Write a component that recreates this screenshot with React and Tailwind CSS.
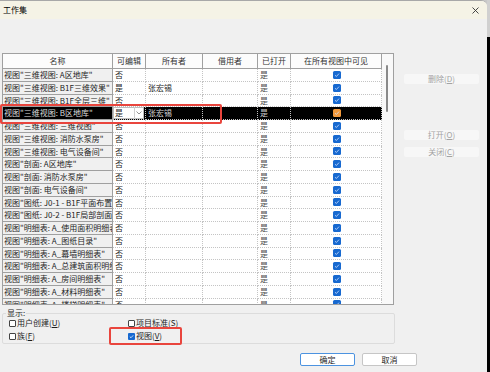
import React from 'react';

const rows = [
  { name: '视图"三维视图: A区地库"', edit: '否', owner: '' },
  { name: '视图"三维视图: B1F三维效果"', edit: '是', owner: '张宏锡' },
  { name: '视图"三维视图: B1F全层三维"', edit: '否', owner: '' },
  { name: '视图"三维视图: B区地库"', edit: '是', owner: '张宏锡', selected: true },
  { name: '视图"三维视图: 三维视图"', edit: '否', owner: '' },
  { name: '视图"三维视图: 消防水泵房"', edit: '否', owner: '' },
  { name: '视图"三维视图: 电气设备间"', edit: '否', owner: '' },
  { name: '视图"剖面: A区地库"', edit: '否', owner: '' },
  { name: '视图"剖面: 消防水泵房"', edit: '否', owner: '' },
  { name: '视图"剖面: 电气设备间"', edit: '否', owner: '' },
  { name: '视图"图纸: J0-1 - B1F平面布置图"', edit: '否', owner: '' },
  { name: '视图"图纸: J0-2 - B1F局部剖面图"', edit: '否', owner: '' },
  { name: '视图"明细表: A_使用面积明细表"', edit: '否', owner: '' },
  { name: '视图"明细表: A_图纸目录"', edit: '否', owner: '' },
  { name: '视图"明细表: A_幕墙明细表"', edit: '否', owner: '' },
  { name: '视图"明细表: A_总建筑面积明细表"', edit: '否', owner: '' },
  { name: '视图"明细表: A_房间明细表"', edit: '否', owner: '' },
  { name: '视图"明细表: A_材料明细表"', edit: '否', owner: '' },
  { name: '视图"明细表: A_楼梯明细表"', edit: '否', owner: '' },
];

function Check({ color = 'bg-[#1769d0]' }) {
  return (
    <span className={`w-[8px] h-[8px] rounded-[1.5px] ${color} flex items-center justify-center`}>
      <svg width="6" height="6" viewBox="0 0 6 6">
        <path d="M1 3.2 L2.4 4.5 L5 1.6" stroke="#cfe2ff" strokeWidth="0.8" fill="none" />
      </svg>
    </span>
  );
}

function Box({ checked, label, hot }) {
  return (
    <div className="flex items-center h-[10px] gap-[1px]">
      {checked ? (
        <span className="w-[7px] h-[7px] rounded-[1px] bg-[#1769d0] flex items-center justify-center">
          <svg width="5" height="5" viewBox="0 0 6 6">
            <path d="M1 3.2 L2.4 4.5 L5 1.6" stroke="#fff" strokeWidth="0.9" fill="none" />
          </svg>
        </span>
      ) : (
        <span className="w-[7px] h-[7px] rounded-[1px] border border-[#444] bg-white" />
      )}
      <span>{label}</span>
      {hot && (
        <span className="absolute left-[-19px] top-[-4px] w-[73px] h-[18px] border-2 border-[#e9453d] rounded-[2px]" />
      )}
    </div>
  );
}

function SideButton({ children, className = '' }) {
  return (
    <div className={`w-[75px] h-[10px] rounded-[2px] bg-[#f7f7f7] text-[#a3a3a3] flex items-center justify-center leading-none ${className}`}>
      {children}
    </div>
  );
}

export default function App() {
  const cell = 'shrink-0 border-r border-b border-dotted border-[#c4c4c4] pl-[2px] overflow-hidden whitespace-nowrap';
  const head = 'shrink-0 border-r border-b border-[#a0a0a0] flex items-center justify-center';

  return (
    <div
      className="w-[490px] h-[372px] flex bg-[#c8c8c8] text-[8px] text-[#1e1e1e] overflow-hidden"
      style={{ fontFamily: '"Noto Sans CJK SC", "Noto Sans", sans-serif' }}
    >
      <div className="w-[487px] h-full flex flex-col bg-[#f0f0f0] rounded-tr-[6px] overflow-hidden border-t border-[#a8a8a8]">
        <div className="h-[18px] shrink-0 bg-[#f5f3e6] flex items-center justify-between pl-[3px] pr-[8px]">
          <span className="text-[8px] text-black">工作集</span>
          <svg width="7" height="7" viewBox="0 0 7 7">
            <path d="M0.5 0.5 L6.5 6.5 M6.5 0.5 L0.5 6.5" stroke="#333" strokeWidth="0.9" />
          </svg>
        </div>

        <div className="flex h-[286px] shrink-0">
          <div className="w-[395px] pt-[34px] pl-[2px]">
            <div className="relative">
              <div className="w-[392px] h-[252px] border border-[#a0a0a0] bg-white flex overflow-hidden">
                <div className="w-[379px] shrink-0 flex flex-col">
                  <div className="flex h-[15px] shrink-0 bg-[#fcfcfc] text-[#333]">
                    <div className={`${head} w-[110px]`}>名称</div>
                    <div className={`${head} w-[33px]`}>可编辑</div>
                    <div className={`${head} w-[57px]`}>所有者</div>
                    <div className={`${head} w-[55px]`}>借用者</div>
                    <div className={`${head} w-[33px]`}>已打开</div>
                    <div className={`${head} w-[91px]`}>在所有视图中可见</div>
                  </div>
                  {rows.map((r) => (
                    <div
                      key={r.name}
                      className={`flex h-[12.75px] shrink-0 leading-[12px] ${r.selected ? 'bg-black text-[#d6d6d6]' : ''}`}
                    >
                      <div
                        className={`w-[110px] shrink-0 pl-[1px] border-r border-b border-[#a0a0a0] overflow-hidden whitespace-nowrap ${
                          r.selected ? 'bg-black text-[#dcdcdc]' : 'bg-[#f0f0f0]'
                        }`}
                      >
                        {r.name}
                      </div>
                      {r.selected ? (
                        <div className="w-[33px] shrink-0 border-b border-r border-dotted border-[#c4c4c4] flex">
                          <div className="w-[31px] h-[12px] bg-white text-[#1e1e1e] border border-[#bdbdbd] flex items-center">
                            <span className="w-[21px] pl-[1px] border-r border-[#d0d0d0]">是</span>
                            <svg width="8" height="6" viewBox="0 0 8 6">
                              <path d="M1.5 1.5 L4 4 L6.5 1.5" stroke="#666" strokeWidth="0.7" fill="none" />
                            </svg>
                          </div>
                        </div>
                      ) : (
                        <div className={`${cell} w-[33px]`}>{r.edit}</div>
                      )}
                      <div className={`${cell} w-[57px]`}>{r.owner}</div>
                      <div className={`${cell} w-[55px]`} />
                      <div className={`${cell} w-[33px] ${r.selected ? 'text-[#cfcfcf]' : 'text-[#4a4a4a]'}`}>是</div>
                      <div className={`${cell} w-[91px] flex items-center justify-center`}>
                        <Check color={r.selected ? 'bg-[#f39a3c]' : 'bg-[#1769d0]'} />
                      </div>
                    </div>
                  ))}
                </div>
                <div className="w-[11px] shrink-0 bg-[#f9f9f9] pt-[11px] pl-[4px]">
                  <div className="w-[2px] h-[47px] rounded-full bg-[#8a8a8a]" />
                </div>
              </div>
              <div className="absolute left-[-2px] top-[51px] w-[222px] h-[20px] border-2 border-[#e9453d] rounded-[2px]" />
            </div>
          </div>

          <div className="flex-1 pl-[9px] pt-[55px] flex flex-col">
            <SideButton>
              删除(<span className="underline">D</span>)
            </SideButton>
            <SideButton className="mt-[46px]">
              打开(<span className="underline">O</span>)
            </SideButton>
            <SideButton className="mt-[7px]">
              关闭(<span className="underline">C</span>)
            </SideButton>
          </div>
        </div>

        <fieldset className="ml-[2px] w-[393px] mt-[3px] border border-[#dcdcdc] rounded-[2px] pb-[2px]">
          <legend className="ml-[3px] px-[1px] leading-[10px]">显示:</legend>
          <div className="grid grid-cols-[119px_auto] gap-y-[3px] pl-[6px]">
            <Box label={<>用户创建(<span className="underline">U</span>)</>} />
            <Box label={<>项目标准(<span className="underline">S</span>)</>} />
            <Box label={<>族(<span className="underline">F</span>)</>} />
            <div className="relative">
              <Box checked hot label={<>视图(<span className="underline">V</span>)</>} />
            </div>
          </div>
        </fieldset>

        <div className="flex justify-end gap-[7px] pr-[70px] mt-[9px]">
          <div className="w-[55px] h-[13px] rounded-[2px] bg-white border border-[#4c93e0] flex items-center justify-center">
            确定
          </div>
          <div className="w-[55px] h-[13px] rounded-[2px] bg-white border border-[#c6c6c6] flex items-center justify-center">
            取消
          </div>
        </div>
      </div>
      <div className="w-[3px] h-full flex flex-col">
        <div className="h-[37px] bg-[#d0d0d0]" />
        <div className="flex-1 bg-black" />
      </div>
    </div>
  );
}
